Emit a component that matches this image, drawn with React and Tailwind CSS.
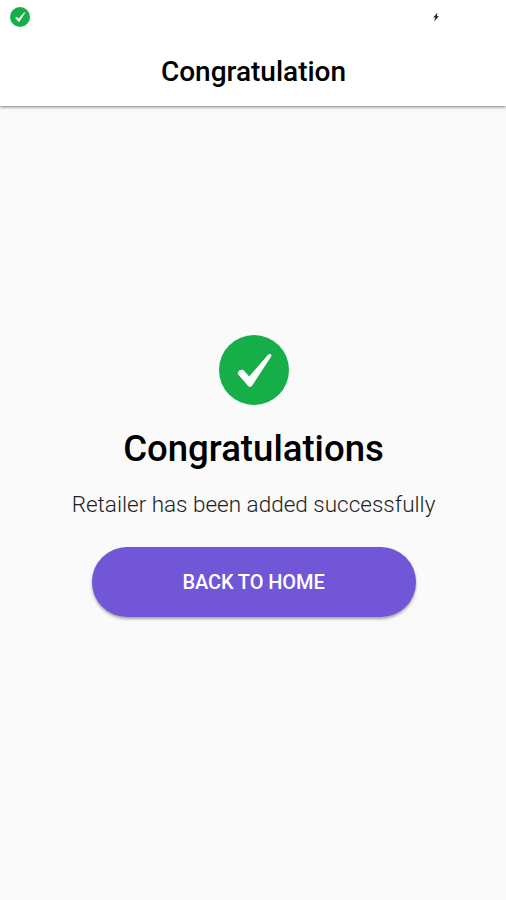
import React from "react";

const CheckBadge = ({ className }) => (
  <svg viewBox="0 0 70 70" className={className} fill="none">
    <circle cx="35" cy="35" r="35" fill="#16ae48" />
    <path
      d="M18.9 37.6C19.4 34.9 23.4 33.7 25.6 36.2L30.2 41.4L49.2 19.6C50.6 18.2 53.2 19.2 52.2 21.6L33.2 50.6C32 52.4 30.4 52.4 29.2 51L19.8 40.2C19 39.4 18.7 38.6 18.9 37.6Z"
      fill="white"
    />
  </svg>
);

const BoltIcon = () => (
  <svg width="8" height="10" viewBox="0 0 8 10" className="ml-auto mr-[66px]">
    <path d="M5.4 0.8L1.2 5.4H3.4L2 9.4L7 4.2H4.9Z" fill="#222222" />
  </svg>
);

const App = () => {
  return (
    <div className="h-screen flex flex-col bg-[#fafafa] font-['Roboto',sans-serif] text-black overflow-hidden">
      <header className="relative h-[106px] shrink-0 bg-white shadow-[0_1px_3px_rgba(0,0,0,0.5)]">
        <div className="h-[34px] flex items-center pl-2.5">
          <CheckBadge className="size-5" />
          <BoltIcon />
        </div>
        <h1 className="h-[76px] pl-px flex items-center justify-center text-[28px] font-medium">
          Congratulation
        </h1>
      </header>

      <main className="flex flex-col items-center pt-[229px] pl-px">
        <CheckBadge className="size-[70px]" />
        <h2 className="mt-[21px] text-[36.6px] leading-[46px] font-medium">
          Congratulations
        </h2>
        <p className="mt-4 text-[22.5px] leading-8 font-light text-[#222222]">
          Retailer has been added successfully
        </p>
        <button
          type="button"
          className="mt-[27px] w-[324px] h-[70px] rounded-full bg-[#7156d8] text-white text-[20px] tracking-[-0.1px] font-medium shadow-[0_2px_3px_rgba(0,0,0,0.35)]"
        >
          BACK TO HOME
        </button>
      </main>
    </div>
  );
};

export default App;
